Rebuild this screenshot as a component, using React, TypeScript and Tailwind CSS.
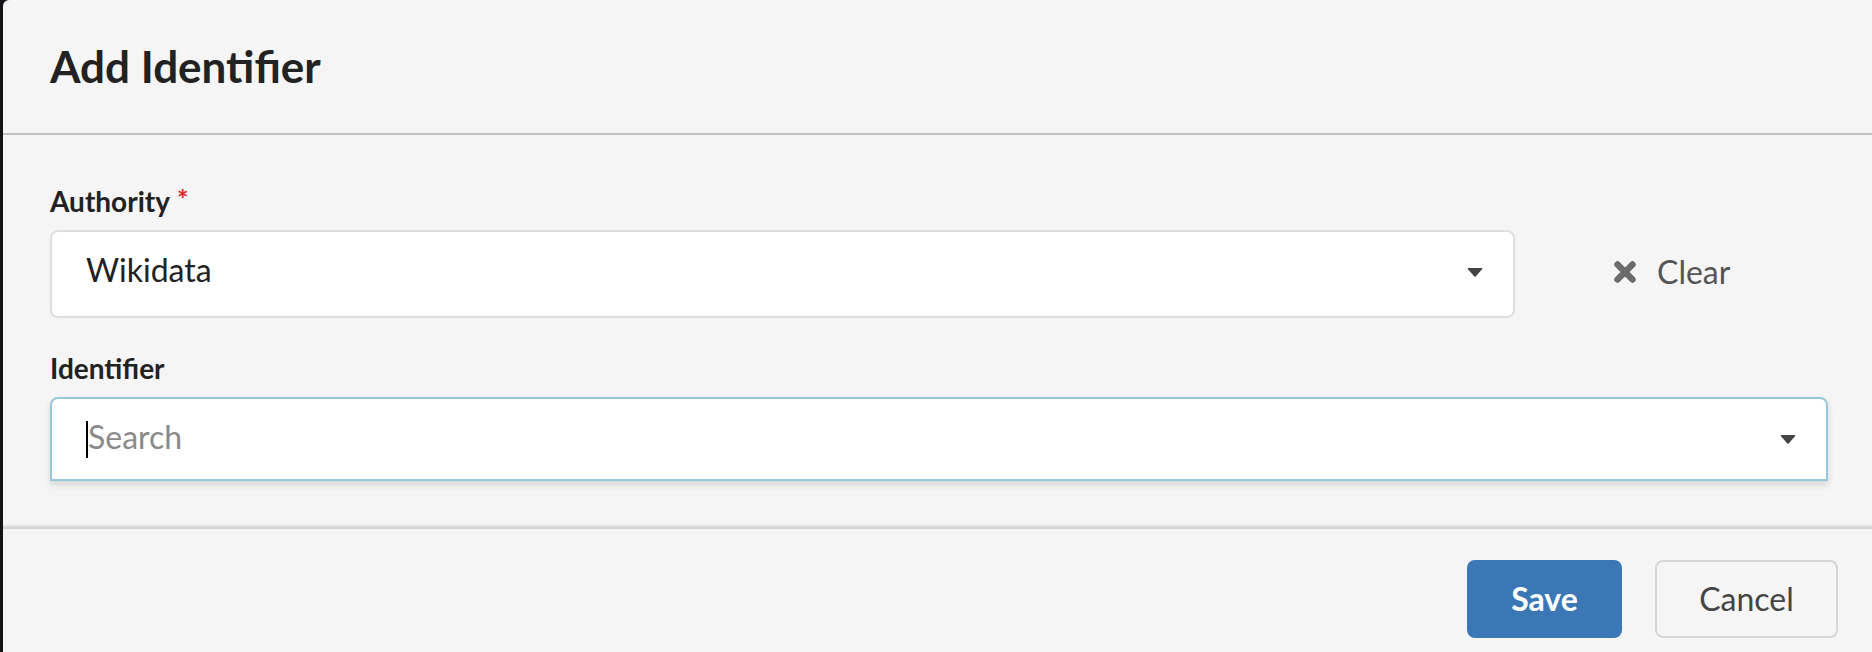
function Caret({ className }: { className?: string }) {
  return (
    <svg width="16" height="9" viewBox="0 0 16 9" className={className}>
      <path d="M1 1.2 C0.5 0.6 0.9 0 1.6 0 H14.4 C15.1 0 15.5 0.6 15 1.2 L8.7 8.4 C8.3 8.8 7.7 8.8 7.3 8.4 Z" fill="#444" />
    </svg>
  );
}

function ClearIcon() {
  return (
    <svg width="24" height="22" viewBox="0 0 24 22">
      <path d="M4.5 3.5 L19.5 18.5 M19.5 3.5 L4.5 18.5" stroke="#6b6b6b" strokeWidth="6.4" strokeLinecap="round" />
    </svg>
  );
}

export default function App() {
  return (
    <div className="flex w-[1872px] h-[652px] bg-[#121417] font-['Lato',sans-serif]">
      <div className="ml-[3px] flex-1 flex flex-col bg-[#f5f5f5] rounded-tl-[6px]">
        <div className="px-[47px] pt-[40px] pb-[41px] border-b-2 border-[#c2c2c2]">
          <h1 className="text-[44px] leading-[52px] font-bold text-[#222]">Add Identifier</h1>
        </div>

        <div className="px-[47px] pt-[49px] pb-[46px]">
          <label className="block text-[28px] leading-[34px] font-bold text-[#222]">
            Authority
            <span className="inline-block align-top ml-[7px] mt-[1px] text-[27px] leading-[27px] text-[#db2828]">*</span>
          </label>
          <div className="mt-[12px] flex items-center">
            <div className="w-[1465px] h-[88px] flex items-center justify-between pl-[34px] pr-[30px] bg-white border-2 border-[#dedede] rounded-[8px]">
              <span className="text-[32px] leading-[38px] mb-[8px] text-[#222]">Wikidata</span>
              <Caret className="mb-[3px]" />
            </div>
            <button className="ml-[98px] flex items-center gap-[20px] mb-[4px]">
              <ClearIcon />
              <span className="text-[32px] leading-[38px] text-[#555]">Clear</span>
            </button>
          </div>

          <label className="block mt-[33px] text-[28px] leading-[34px] font-bold text-[#222]">Identifier</label>
          <div className="mt-[12px] w-[1778px] h-[84px] flex items-center justify-between pl-[34px] pr-[30px] bg-white border-2 border-[#96c8da] rounded-t-[8px] shadow-[0_4px_6px_rgba(34,36,38,0.15)]">
            <div className="flex items-center">
              <span className="w-[2px] h-[37px] bg-black" />
              <span className="text-[32px] leading-[38px] mb-[4px] text-[#8a8a8a]">Search</span>
            </div>
            <Caret />
          </div>
        </div>

        <div className="flex-1 flex justify-end items-start gap-[33px] pr-[37px] pt-[31px] border-t-2 border-[#d4d4d4] shadow-[0_-2px_0_0_#e3e3e3]">
          <button className="w-[155px] h-[78px] rounded-[8px] bg-[#3b76b5] text-white text-[32px] font-bold">Save</button>
          <button className="w-[183px] h-[78px] rounded-[8px] border-2 border-[#d6d6d6] bg-[#f5f5f5] text-[#444] text-[32px]">Cancel</button>
        </div>
      </div>
    </div>
  );
}
